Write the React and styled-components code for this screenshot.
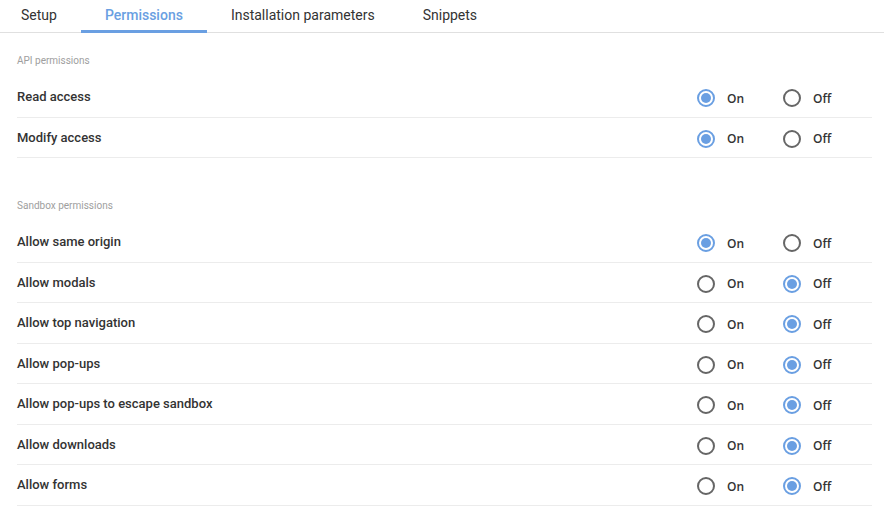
import React, { useState } from 'react'
import styled, { createGlobalStyle } from 'styled-components'

const GlobalStyle = createGlobalStyle`
  body {
    margin: 0;
    background: #fff;
    font-family: Roboto, "Liberation Sans", sans-serif;
  }
`

const BLUE = '#6a9fe2'

const Tabs = styled.nav`
  display: flex;
  height: 32px;
  border-bottom: 1px solid #e0e0e0;
`

const Tab = styled.div`
  display: flex;
  align-items: center;
  padding: 0 24px 1px;
  font-size: 14px;
  font-weight: ${props => props.active ? 500 : 400};
  color: ${props => props.active ? BLUE : '#333'};
  border-bottom: 3px solid ${props => props.active ? BLUE : 'transparent'};
  margin-bottom: -1px;
  cursor: pointer;
  &:first-child {
    padding-left: 21px;
  }
`

const Content = styled.div`
  padding: 0 12px 0 17px;
`

const Section = styled.section`
  padding-top: 21px;
  margin-bottom: 20px;
`

const Heading = styled.div`
  font-size: 10px;
  line-height: 14px;
  color: #9e9e9e;
  margin-bottom: 9px;
`

const Row = styled.div`
  display: flex;
  align-items: center;
  justify-content: space-between;
  height: 39.5px;
  border-bottom: 1px solid #ececec;
`

const Label = styled.div`
  font-size: 13px;
  font-weight: 500;
  color: #333;
`

const Options = styled.div`
  display: flex;
  padding: 3px 3px 0 0;
`

const Option = styled.label`
  display: flex;
  align-items: center;
  width: 86px;
  gap: 12px;
  cursor: pointer;
  font-family: "Open Sans", sans-serif;
  font-size: 12px;
  font-weight: 600;
  color: #333;
`

const Circle = styled.span`
  box-sizing: border-box;
  width: 18px;
  height: 18px;
  border-radius: 50%;
  border: 2px solid ${props => props.checked ? BLUE : '#666'};
  display: flex;
  align-items: center;
  justify-content: center;
  &::after {
    content: '';
    width: 10px;
    height: 10px;
    border-radius: 50%;
    background: ${BLUE};
    display: ${props => props.checked ? 'block' : 'none'};
  }
`

const api = [
  ['read', 'Read access', true],
  ['modify', 'Modify access', true],
]

const sandbox = [
  ['origin', 'Allow same origin', true],
  ['modals', 'Allow modals', false],
  ['top', 'Allow top navigation', false],
  ['popups', 'Allow pop-ups', false],
  ['escape', 'Allow pop-ups to escape sandbox', false],
  ['downloads', 'Allow downloads', false],
  ['forms', 'Allow forms', false],
]

const initial = {}
;[...api, ...sandbox].forEach(([k, , v]) => { initial[k] = v })

const App = () => {
  const [values, setValues] = useState(initial)

  const renderRows = list => list.map(([key, label]) => (
    <Row key={key}>
      <Label>{label}</Label>
      <Options>
        <Option onClick={() => setValues({ ...values, [key]: true })}>
          <Circle checked={values[key]} />
          On
        </Option>
        <Option onClick={() => setValues({ ...values, [key]: false })}>
          <Circle checked={!values[key]} />
          Off
        </Option>
      </Options>
    </Row>
  ))

  return (
    <>
      <GlobalStyle />
      <Tabs>
        <Tab>Setup</Tab>
        <Tab active>Permissions</Tab>
        <Tab>Installation parameters</Tab>
        <Tab>Snippets</Tab>
      </Tabs>
      <Content>
        <Section>
          <Heading>API permissions</Heading>
          {renderRows(api)}
        </Section>
        <Section>
          <Heading>Sandbox permissions</Heading>
          {renderRows(sandbox)}
        </Section>
      </Content>
    </>
  )
}

export default App
